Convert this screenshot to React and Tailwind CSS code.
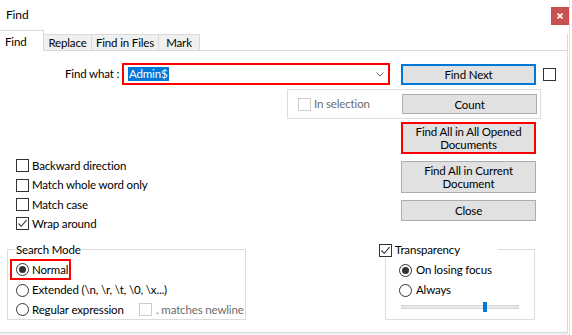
import React from "react";

function CheckBox({ checked = false, disabled = false }) {
  return (
    <span
      className={`w-[13px] h-[13px] shrink-0 border bg-white flex items-center justify-center ${
        disabled ? "border-[#cccccc]" : "border-[#333333]"
      }`}
    >
      {checked && (
        <svg width="11" height="11" viewBox="0 0 11 11">
          <path d="M1.5 5.5 L4.2 8.3 L9.6 2.2" fill="none" stroke="#333333" strokeWidth="1.1" />
        </svg>
      )}
    </span>
  );
}

function Radio({ checked = false }) {
  return (
    <span className="w-[13px] h-[13px] shrink-0 rounded-full border border-[#333333] bg-white flex items-center justify-center">
      {checked && <span className="w-[7px] h-[7px] rounded-full bg-[#333333]" />}
    </span>
  );
}

function Button({ children, className = "" }) {
  return (
    <div
      className={`w-[135px] shrink-0 bg-[#e1e1e1] flex items-center justify-center text-center leading-[13px] whitespace-nowrap ${className}`}
    >
      {children}
    </div>
  );
}

const options = [
  { label: "Backward direction", h: "h-[19px]" },
  { label: "Match whole word only", h: "h-[20px]" },
  { label: "Match case", h: "h-[19px]" },
  { label: "Wrap around", h: "h-[19px]", checked: true },
];

export default function App() {
  return (
    <div className="w-[572px] h-[335px] bg-white text-[11.5px] tracking-[-0.15px] text-black font-['Lato',sans-serif] whitespace-nowrap flex overflow-hidden">
      <div className="w-[569px] shrink-0 flex flex-col">
        {/* title bar */}
        <div className="h-[30px] shrink-0 flex items-start">
          <span className="ml-[6px] mt-[7px] leading-[16px] text-[12px]">Find</span>
          <div className="ml-auto mt-[7px] w-[18px] h-[18px] bg-[#c75050] flex items-center justify-center">
            <svg width="6" height="6" viewBox="0 0 6 6">
              <path d="M0.5 0.5 L5.5 5.5 M5.5 0.5 L0.5 5.5" stroke="white" strokeWidth="1.6" />
            </svg>
          </div>
        </div>

        {/* tabs */}
        <div className="h-[21px] shrink-0 flex items-end w-[568px]">
          <div className="w-[44px] h-[21px] bg-white border-t border-r border-[#d9d9d9] pl-[5px] pt-[3px] leading-[16px]">
            Find
          </div>
          <div className="w-[48px] h-[17px] bg-[#f0f0f0] border-t border-r border-b border-[#d9d9d9] text-center leading-[16px]">
            Replace
          </div>
          <div className="w-[67px] h-[17px] bg-[#f0f0f0] border-t border-r border-b border-[#d9d9d9] text-center leading-[16px]">
            Find in Files
          </div>
          <div className="w-[41px] h-[17px] bg-[#f0f0f0] border-t border-r border-b border-[#d9d9d9] text-center leading-[16px]">
            Mark
          </div>
          <div className="flex-1 h-[17px] border-b border-r border-[#d9d9d9]" />
        </div>

        {/* panel */}
        <div className="w-[568px] h-[282px] shrink-0 border-r border-b border-[#d9d9d9] flex flex-col">
          {/* find what row */}
          <div className="mt-[12px] h-[22px] flex items-center">
            <span className="ml-[65px] w-[57px] leading-[16px]">Find what :</span>
            <div className="w-[268px] h-[22px] border-2 border-[#ff0000] flex items-center">
              <span className="ml-[4px] px-[1px] leading-[14px] bg-[#0078d7] text-white">Admin$</span>
              <svg className="ml-auto mr-[4px]" width="8" height="5" viewBox="0 0 8 5">
                <path d="M0.5 0.5 L4 4 L7.5 0.5" fill="none" stroke="#606060" strokeWidth="1" />
              </svg>
            </div>
            <Button className="ml-[11px] h-[21px] border-2 border-[#0078d7]">Find Next</Button>
            <span className="ml-[7px]">
              <CheckBox />
            </span>
          </div>

          {/* in selection group */}
          <div className="mt-[4px] ml-[287px] w-[254px] h-[30px] border border-[#dcdcdc] flex items-center">
            <span className="ml-[10px]">
              <CheckBox disabled />
            </span>
            <span className="ml-[3px] text-[#6d6d6d] leading-[16px]">In selection</span>
            <Button className="ml-auto mr-[3px] h-[20px] border border-[#adadad]">Count</Button>
          </div>

          {/* lower area */}
          <div className="flex">
            {/* left column */}
            <div className="w-[379px] shrink-0 flex flex-col">
              <div className="mt-[37px] flex flex-col">
                {options.map((o) => (
                  <div key={o.label} className={`${o.h} pl-[16px] flex items-center`}>
                    <CheckBox checked={o.checked} />
                    <span className="ml-[3px] leading-[16px]">{o.label}</span>
                  </div>
                ))}
              </div>

              <fieldset className="mt-[9px] ml-[7px] w-[239px] border border-[#dcdcdc]">
                <legend className="ml-[7px] px-[1px] leading-[15px]">Search Mode</legend>
                <div className="mt-[2px] ml-[2px] w-[61px] h-[21px] border-2 border-[#ff0000] pl-[4px] flex items-center">
                  <Radio checked />
                  <span className="ml-[3px] leading-[16px]">Normal</span>
                </div>
                <div className="h-[20px] pl-[8px] flex items-center">
                  <Radio />
                  <span className="ml-[3px] leading-[16px]">Extended (\n, \r, \t, \0, \x...)</span>
                </div>
                <div className="h-[19px] pl-[8px] flex items-center">
                  <Radio />
                  <span className="ml-[3px] w-[107px] shrink-0 leading-[16px]">Regular expression</span>
                  <CheckBox disabled />
                  <span className="ml-[4px] text-[#6d6d6d] leading-[16px]">. matches newline</span>
                </div>
              </fieldset>
            </div>

            {/* right column */}
            <div className="flex flex-col">
              <Button className="mt-[3px] ml-[22px] h-[32px] border-2 border-[#ff0000]">
                Find All in All Opened
                <br />
                Documents
              </Button>
              <Button className="mt-[7px] ml-[22px] h-[32px] border border-[#adadad]">
                Find All in Current
                <br />
                Document
              </Button>
              <Button className="mt-[7px] ml-[22px] h-[21px] border border-[#adadad]">Close</Button>

              <div className="relative mt-[21px]">
                <div className="mt-[7px] ml-[6px] w-[150px] h-[71px] border border-[#dcdcdc] pt-[10px] pl-[13px] flex flex-col">
                  <div className="h-[20px] flex items-center">
                    <Radio checked />
                    <span className="ml-[4px] leading-[16px]">On losing focus</span>
                  </div>
                  <div className="h-[20px] flex items-center">
                    <Radio />
                    <span className="ml-[4px] leading-[16px]">Always</span>
                  </div>
                  <div className="relative h-[13px] ml-[2px] flex items-center">
                    <div className="w-[118px] h-[4px] bg-[#e7eaea] border border-[#d6d6d6]" />
                    <div className="absolute left-[82px] top-[2px] w-[4px] h-[10px] bg-[#0078d7]" />
                  </div>
                </div>
                <div className="absolute top-0 left-0 w-[119px] h-[16px] bg-white flex items-center">
                  <CheckBox checked />
                  <span className="ml-[3px] leading-[16px]">Transparency</span>
                </div>
              </div>
            </div>
          </div>
        </div>

        <div className="flex-1 bg-[#f0f0f0]" />
      </div>
      <div className="w-[1px] shrink-0 bg-[#e3e3e3]" />
    </div>
  );
}
